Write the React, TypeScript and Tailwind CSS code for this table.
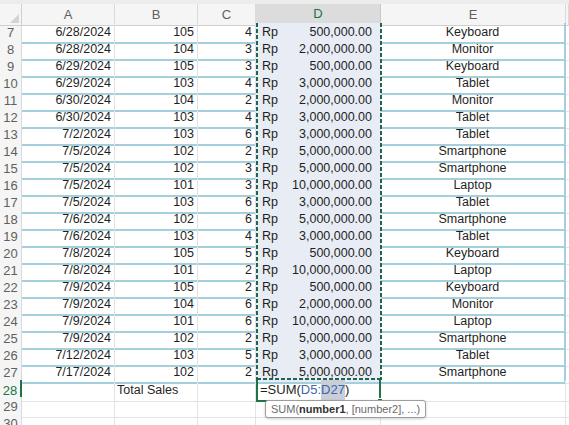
import React from "react";

type Row = [string, string, string, string, string];

const rows: Row[] = [
  ["6/28/2024", "105", "4", "500,000.00", "Keyboard"],
  ["6/28/2024", "104", "3", "2,000,000.00", "Monitor"],
  ["6/29/2024", "105", "3", "500,000.00", "Keyboard"],
  ["6/29/2024", "103", "4", "3,000,000.00", "Tablet"],
  ["6/30/2024", "104", "2", "2,000,000.00", "Monitor"],
  ["6/30/2024", "103", "4", "3,000,000.00", "Tablet"],
  ["7/2/2024", "103", "6", "3,000,000.00", "Tablet"],
  ["7/5/2024", "102", "2", "5,000,000.00", "Smartphone"],
  ["7/5/2024", "102", "3", "5,000,000.00", "Smartphone"],
  ["7/5/2024", "101", "3", "10,000,000.00", "Laptop"],
  ["7/5/2024", "103", "6", "3,000,000.00", "Tablet"],
  ["7/6/2024", "102", "6", "5,000,000.00", "Smartphone"],
  ["7/6/2024", "103", "4", "3,000,000.00", "Tablet"],
  ["7/8/2024", "105", "5", "500,000.00", "Keyboard"],
  ["7/8/2024", "101", "2", "10,000,000.00", "Laptop"],
  ["7/9/2024", "105", "2", "500,000.00", "Keyboard"],
  ["7/9/2024", "104", "6", "2,000,000.00", "Monitor"],
  ["7/9/2024", "101", "6", "10,000,000.00", "Laptop"],
  ["7/9/2024", "102", "2", "5,000,000.00", "Smartphone"],
  ["7/12/2024", "103", "5", "3,000,000.00", "Tablet"],
  ["7/17/2024", "102", "2", "5,000,000.00", "Smartphone"],
];

const cols = "grid grid-cols-[22px_93px_83px_58px_125px_185px_1fr]";
const rowHead = "flex items-center justify-center bg-[#f5f5f5] border-r border-b border-[#dadada] text-[13px] text-[#5f5f5f]";
const dataCell = "flex items-center border-r border-[#e2e2e2] border-b-2 border-b-[#a3d0dc]";
const blank = "border-r border-b border-[#e3e3e3]";

function ColHeader({ label, active }: { label: string; active?: boolean }) {
  return (
    <div
      className={
        active
          ? "flex items-center justify-center bg-[#dcdcdc] border-r border-[#c9c9c9] border-b-2 border-b-[#217346] text-[13px] text-[#217346]"
          : "flex items-center justify-center bg-[#f5f5f5] border-r border-[#dadada] border-b border-b-[#cfcfcf] text-[13px] text-[#5f5f5f]"
      }
    >
      {label}
    </div>
  );
}

export default function App() {
  return (
    <div className="relative w-[569px] h-[425px] overflow-hidden bg-white text-[12.5px] text-[#1f1f1f] font-['Liberation_Sans',Arial,sans-serif]">
      <div className="h-[4px] bg-[#ececec]" />

      {/* column headers */}
      <div className={`${cols} h-[19px]`}>
        <div className="relative bg-[#f5f5f5] border-r border-b border-[#cfcfcf]">
          <svg className="absolute right-[2px] bottom-[2px]" width="9" height="9" viewBox="0 0 9 9">
            <polygon points="9,0 9,9 0,9" fill="#d4d4d4" />
          </svg>
        </div>
        <ColHeader label="A" />
        <ColHeader label="B" />
        <ColHeader label="C" />
        <ColHeader label="D" active />
        <ColHeader label="E" />
        <ColHeader label="" />
      </div>

      {/* table rows 7-27 */}
      {rows.map((r, i) => (
        <div key={i} className={`${cols} h-[17px]`}>
          <div className={rowHead}>{i + 7}</div>
          <div className={`${dataCell} justify-end pr-[3px]`}>{r[0]}</div>
          <div className={`${dataCell} justify-end pr-[3px]`}>{r[1]}</div>
          <div className={`${dataCell} justify-end pr-[3px]`}>{r[2]}</div>
          <div className={`${dataCell} justify-between bg-[#e8edf5] pl-[6px] pr-[8px]`}>
            <span>Rp</span>
            <span>{r[3]}</span>
          </div>
          <div className={`${dataCell} justify-center border-r-2 border-r-[#a3d0dc]`}>{r[4]}</div>
          <div className="border-b border-[#e3e3e3]" />
        </div>
      ))}

      {/* row 28 */}
      <div className={`${cols} h-[17px]`}>
        <div className={`${rowHead} bg-[#e4e4e4] text-[#217346] border-r-2 border-r-[#217346]`}>28</div>
        <div className={blank} />
        <div className={`${blank} flex items-center pl-[2px]`}>Total Sales</div>
        <div className={blank} />
        <div className="relative flex items-center pl-[2px] border-x-2 border-b-2 border-[#217346] text-[13px]">
          <span>=SUM(</span>
          <span className="text-[#3d68a8]">D5:</span>
          <span className="text-[#3d68a8] bg-[#c9ced8]">D27</span>
          <span>)</span>
          <div className="absolute right-[-4px] bottom-[-4px] w-[6px] h-[6px] bg-[#217346] border border-white" />
        </div>
        <div className={blank} />
        <div className="border-b border-[#e3e3e3]" />
      </div>

      {/* rows 29-30 */}
      {[29, 30].map((n) => (
        <div key={n} className={`${cols} h-[17px]`}>
          <div className={rowHead}>{n}</div>
          <div className={blank} />
          <div className={blank} />
          <div className={blank} />
          <div className={blank} />
          <div className={blank} />
          <div className="border-b border-[#e3e3e3]" />
        </div>
      ))}

      {/* copy/formula range marquee */}
      <svg className="absolute left-[255px] top-[23px]" width="128" height="359" viewBox="0 0 128 359">
        <g stroke="#22644e" strokeWidth="2" strokeDasharray="4 2" fill="none">
          <line x1="2" y1="0" x2="2" y2="357" />
          <line x1="126" y1="0" x2="126" y2="357" />
          <line x1="2" y1="356" x2="126" y2="356" />
        </g>
      </svg>

      {/* function tooltip */}
      <div className="absolute left-[265px] top-[400px] h-[18px] flex items-center px-[5px] rounded-[3px] border border-[#9d9d9d] bg-white shadow-[0_1px_3px_rgba(0,0,0,0.2)] text-[11px] text-[#6a6a6a] whitespace-nowrap">
        SUM(<b className="text-[#333]">number1</b>, [number2], ...)
      </div>
    </div>
  );
}
